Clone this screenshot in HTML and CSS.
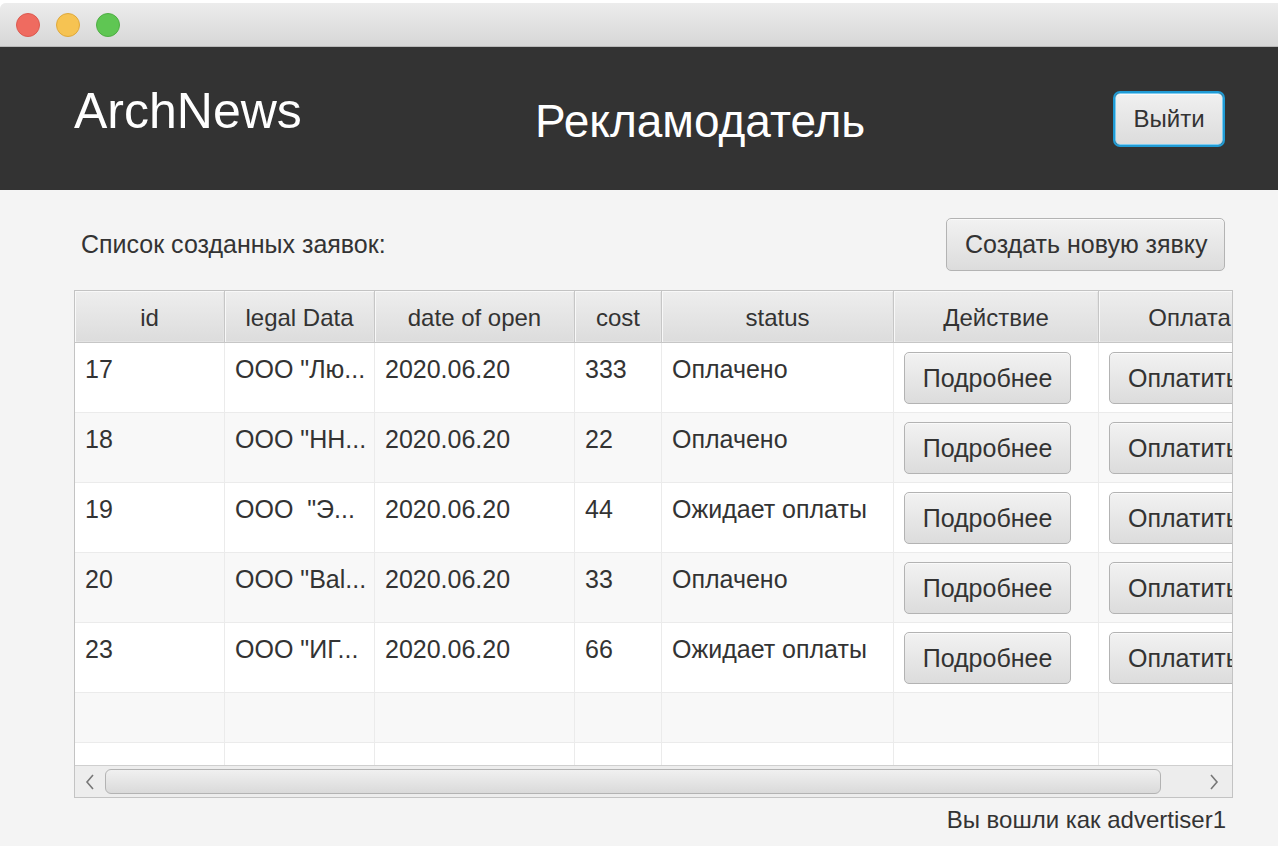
FILE: index.html
```html
<!DOCTYPE html>
<html lang="ru">
<head>
<meta charset="utf-8">
<title>ArchNews</title>
<link rel="stylesheet" href="styles.css">
</head>
<body>
<div class="window">
  <div class="titlebar">
    <span class="light red"></span>
    <span class="light yellow"></span>
    <span class="light green"></span>
  </div>
  <header class="appbar">
    <div class="brand">ArchNews</div>
    <div class="role">Рекламодатель</div>
    <button class="btn btn-exit">Выйти</button>
  </header>
  <main class="content">
    <div class="toolbar">
      <span class="caption">Список созданных заявок:</span>
      <button class="btn btn-create">Создать новую зявку</button>
    </div>
    <div class="table">
      <div class="viewport">
        <div class="row head">
          <div class="hcell">id</div>
          <div class="hcell">legal Data</div>
          <div class="hcell">date of open</div>
          <div class="hcell">cost</div>
          <div class="hcell">status</div>
          <div class="hcell">Действие</div>
          <div class="hcell">Оплата</div>
        </div>
        <div class="row data">
          <div class="cell">17</div>
          <div class="cell">ООО "Лю...</div>
          <div class="cell">2020.06.20</div>
          <div class="cell">333</div>
          <div class="cell">Оплачено</div>
          <div class="cell bcell"><button class="btn btn-row">Подробнее</button></div>
          <div class="cell bcell"><button class="btn btn-row btn-pay">Оплатить</button></div>
        </div>
        <div class="row data alt">
          <div class="cell">18</div>
          <div class="cell">ООО "НН...</div>
          <div class="cell">2020.06.20</div>
          <div class="cell">22</div>
          <div class="cell">Оплачено</div>
          <div class="cell bcell"><button class="btn btn-row">Подробнее</button></div>
          <div class="cell bcell"><button class="btn btn-row btn-pay">Оплатить</button></div>
        </div>
        <div class="row data">
          <div class="cell">19</div>
          <div class="cell">ООО &nbsp;"Э...</div>
          <div class="cell">2020.06.20</div>
          <div class="cell">44</div>
          <div class="cell">Ожидает оплаты</div>
          <div class="cell bcell"><button class="btn btn-row">Подробнее</button></div>
          <div class="cell bcell"><button class="btn btn-row btn-pay">Оплатить</button></div>
        </div>
        <div class="row data alt">
          <div class="cell">20</div>
          <div class="cell">ООО "Bal...</div>
          <div class="cell">2020.06.20</div>
          <div class="cell">33</div>
          <div class="cell">Оплачено</div>
          <div class="cell bcell"><button class="btn btn-row">Подробнее</button></div>
          <div class="cell bcell"><button class="btn btn-row btn-pay">Оплатить</button></div>
        </div>
        <div class="row data">
          <div class="cell">23</div>
          <div class="cell">ООО "ИГ...</div>
          <div class="cell">2020.06.20</div>
          <div class="cell">66</div>
          <div class="cell">Ожидает оплаты</div>
          <div class="cell bcell"><button class="btn btn-row">Подробнее</button></div>
          <div class="cell bcell"><button class="btn btn-row btn-pay">Оплатить</button></div>
        </div>
        <div class="row empty alt">
          <div class="cell"></div><div class="cell"></div><div class="cell"></div><div class="cell"></div><div class="cell"></div><div class="cell"></div><div class="cell"></div>
        </div>
        <div class="row empty">
          <div class="cell"></div><div class="cell"></div><div class="cell"></div><div class="cell"></div><div class="cell"></div><div class="cell"></div><div class="cell"></div>
        </div>
      </div>
      <div class="hscroll">
        <span class="arrow">
          <svg width="12" height="18" viewBox="0 0 12 18"><path d="M9 2 L3 9 L9 16" fill="none" stroke="#777" stroke-width="1.6"/></svg>
        </span>
        <span class="thumb"></span>
        <span class="arrow right">
          <svg width="12" height="18" viewBox="0 0 12 18"><path d="M3 2 L9 9 L3 16" fill="none" stroke="#777" stroke-width="1.6"/></svg>
        </span>
      </div>
    </div>
    <div class="status-line">Вы вошли как advertiser1</div>
  </main>
</div>
</body>
</html>
```
FILE: styles.css
```css
* { box-sizing: border-box; }

html, body {
  margin: 0;
  padding: 0;
  background: #ffffff;
  overflow: hidden;
}

body {
  font-family: "Liberation Sans", Arial, sans-serif;
  color: #333333;
}

.window {
  margin-top: 3px;
  width: 1300px;
  height: 843px;
  border-radius: 6px 6px 0 0;
  overflow: hidden;
  background: #f4f4f4;
}

.titlebar {
  height: 44px;
  display: flex;
  align-items: center;
  gap: 16px;
  padding-left: 16px;
  background: linear-gradient(#ececec, #d7d7d7);
  border-bottom: 1px solid #b8b8b8;
}

.light {
  width: 24px;
  height: 24px;
  border-radius: 50%;
  display: block;
}
.red { background: #ef6b60; border: 1px solid #dc5a50; }
.yellow { background: #f6c352; border: 1px solid #dfa93c; }
.green { background: #5fc653; border: 1px solid #4fae44; }

.appbar {
  height: 143px;
  background: #333333;
  display: flex;
  align-items: flex-start;
  padding-left: 74px;
}

.brand {
  color: #ffffff;
  font-size: 50px;
  line-height: 50px;
  margin-top: 39px;
  width: 461px;
}

.role {
  color: #ffffff;
  font-size: 46px;
  line-height: 46px;
  margin-top: 51px;
  width: 579px;
}

.btn {
  font-family: "Liberation Sans", Arial, sans-serif;
  color: #333333;
  font-size: 25px;
  border: 1px solid #b3b3b3;
  border-radius: 5px;
  background: linear-gradient(#f2f2f2, #dcdcdc);
  box-shadow: inset 0 1px 0 #fafafa;
  padding: 0;
  cursor: pointer;
  white-space: nowrap;
  overflow: hidden;
}

.btn-exit {
  margin-top: 46px;
  margin-left: 1px;
  width: 108px;
  height: 52px;
  font-size: 24px;
  border: 1px solid #7fcbef;
  box-shadow: 0 0 0 2px #1f9bd5, inset 0 1px 0 #fafafa;
  background: linear-gradient(#f0f0f0, #dcdcdc);
}

.content {
  padding-left: 74px;
  width: 1233px;
}

.toolbar {
  display: flex;
  justify-content: space-between;
  align-items: center;
  padding-top: 28px;
  padding-right: 8px;
  height: 81px;
}

.caption {
  font-size: 25px;
  margin-left: 7px;
}

.btn-create {
  width: 279px;
  height: 53px;
  text-align: left;
  padding-left: 18px;
}

.table {
  margin-top: 19px;
  width: 1159px;
  border: 1px solid #c3c3c3;
  background: #ffffff;
}

.viewport {
  height: 474px;
  overflow: hidden;
}

.row {
  display: grid;
  grid-template-columns: 150px 150px 200px 87px 232px 205px 182px;
  width: 1206px;
}

.head {
  height: 52px;
  border-bottom: 1px solid #c6c6c6;
}

.hcell {
  display: flex;
  align-items: center;
  justify-content: center;
  font-size: 24px;
  background: linear-gradient(#eeeeee, #dcdcdc);
  border-right: 1px solid #c6c6c6;
  box-shadow: inset 1px 1px 0 #f8f8f8, inset -1px -1px 0 #e4e4e4;
  padding-top: 2px;
}

.data { height: 70px; }
.empty { height: 50px; }
.alt { background: #f8f8f8; }

.cell {
  font-size: 25px;
  line-height: 28px;
  padding: 12px 10px;
  border-right: 1px solid #ebebeb;
  border-bottom: 1px solid #ebebeb;
  white-space: nowrap;
  overflow: hidden;
}

.bcell {
  padding: 9px 9px 9px 10px;
}

.btn-row {
  width: 167px;
  height: 52px;
}

.btn-pay {
  text-align: left;
  padding-left: 18px;
}

.hscroll {
  height: 32px;
  border-top: 1px solid #cfcfcf;
  background: #ededed;
  display: flex;
  align-items: center;
}

.arrow {
  width: 30px;
  display: flex;
  justify-content: center;
  align-items: center;
}

.arrow.right {
  margin-left: auto;
  width: 36px;
}

.thumb {
  display: block;
  width: 1056px;
  height: 25px;
  border: 1px solid #b3b3b3;
  border-radius: 6px;
  background: linear-gradient(#f0f0f0, #dadada);
}

.status-line {
  text-align: right;
  font-size: 24px;
  line-height: 28px;
  margin-top: 8px;
  padding-right: 7px;
}
```
